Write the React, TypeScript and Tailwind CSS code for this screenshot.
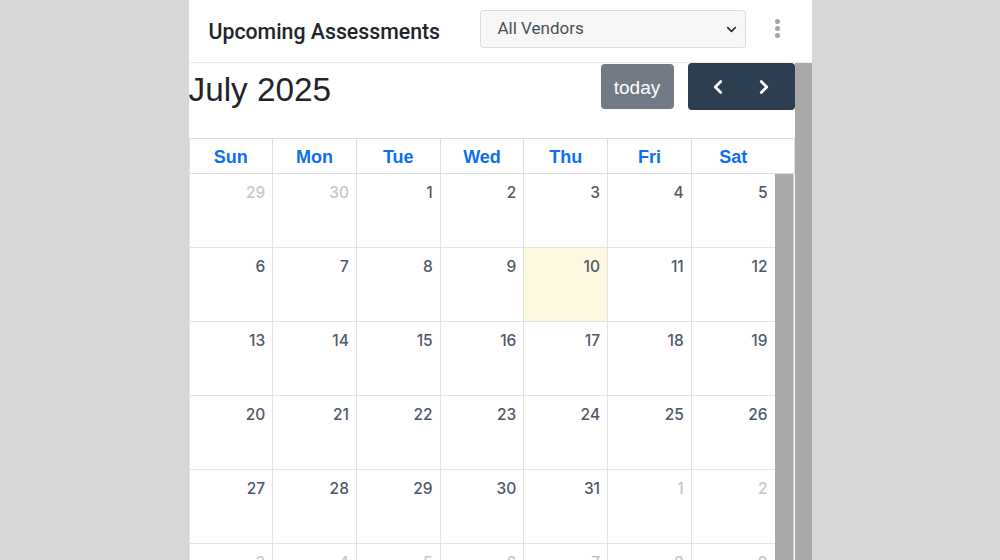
import { ChevronDown, ChevronLeft, ChevronRight } from "lucide-react";

const weeks = [
  [29, 30, 1, 2, 3, 4, 5],
  [6, 7, 8, 9, 10, 11, 12],
  [13, 14, 15, 16, 17, 18, 19],
  [20, 21, 22, 23, 24, 25, 26],
  [27, 28, 29, 30, 31, 1, 2],
  [3, 4, 5, 6, 7, 8, 9],
];

const days = ["Sun", "Mon", "Tue", "Wed", "Thu", "Fri", "Sat"];

const App = () => {
  return (
    <div className="w-[1000px] h-[560px] bg-[#d7d7d7] flex justify-center overflow-hidden">
      <div className="w-[623px] h-full bg-white flex flex-col">
        {/* card header */}
        <div className="h-[63px] flex-none flex items-center border-b border-[#ececec] pl-5 font-['Roboto',sans-serif]">
          <h2 className="text-[21.3px] font-medium text-[#212529] w-[271px] pt-[2px] whitespace-nowrap">
            Upcoming Assessments
          </h2>
          <div className="w-[266px] h-[38px] -mt-[4px] flex items-center justify-between pl-[17px] pr-[4px] bg-[#f7f7f7] border border-[#dcdcdc] rounded-[3px] text-[17px] text-[#495057]">
            <span>All Vendors</span>
            <ChevronDown size={15} strokeWidth={2.8} className="text-[#333] mr-[2px]" />
          </div>
          <div className="ml-[29px] -mt-[6px] flex flex-col gap-[2px]">
            <span className="w-[5px] h-[5px] rounded-full bg-[#a3a3a3]" />
            <span className="w-[5px] h-[5px] rounded-full bg-[#a3a3a3]" />
            <span className="w-[5px] h-[5px] rounded-full bg-[#a3a3a3]" />
          </div>
        </div>

        {/* scroll area */}
        <div className="flex-1 flex min-h-0">
          <div className="w-[606px] flex-none flex flex-col font-['Liberation_Sans',Arial,sans-serif]">
            {/* toolbar */}
            <div className="h-[75px] flex-none flex items-start justify-between">
              <h1 className="text-[33.3px] text-[#212529] leading-none mt-[10px]">July 2025</h1>
              <div className="flex items-start">
                <button className="w-[73px] h-[45px] mt-[1px] rounded-[4px] bg-[#727b85] text-white text-[19px] pt-[3px]">
                  today
                </button>
                <div className="ml-[14px] w-[107px] h-[47px] rounded-[4px] bg-[#2c3e50] flex items-center justify-around text-white px-[8px]">
                  <ChevronLeft size={22} strokeWidth={3} />
                  <ChevronRight size={22} strokeWidth={3} />
                </div>
              </div>
            </div>

            {/* day headers */}
            <div className="h-[36px] flex-none flex border-t border-b border-[#dedede]">
              <div className="w-[586px] grid grid-cols-7">
                {days.map((d) => (
                  <div
                    key={d}
                    className="border-l border-[#dedede] flex items-center justify-center pt-[3px] text-[18px] font-bold text-[#0b6ff2]"
                  >
                    {d}
                  </div>
                ))}
              </div>
              <div className="flex-1 border-r border-[#dedede]" />
            </div>

            {/* body */}
            <div className="flex-1 flex min-h-0 overflow-hidden">
              <div className="w-[586px] flex-none flex flex-col font-['Inter',sans-serif]">
                {weeks.map((week, wi) => (
                  <div key={wi} className="h-[74px] flex-none grid grid-cols-7 border-b border-[#e3e3e3]">
                    {week.map((n, di) => {
                      const other = (wi === 0 && n > 20) || (wi >= 4 && n < 10);
                      const today = wi === 1 && n === 10;
                      return (
                        <div
                          key={di}
                          className={`border-l border-[#e3e3e3] text-right pr-[7px] pt-[7px] text-[15.5px] font-medium ${
                            other ? "text-[#c3c6cb]" : "text-[#4f5869]"
                          } ${today ? "bg-[#fdf8df]" : ""}`}
                        >
                          {n}
                        </div>
                      );
                    })}
                  </div>
                ))}
              </div>
              <div className="w-[19px] flex-none bg-[#a9a9a9] border-r border-[#c9c9c9]" />
            </div>
          </div>
          <div className="w-[17px] flex-none bg-[#a9a9a9]" />
        </div>
      </div>
    </div>
  );
};

export default App;
